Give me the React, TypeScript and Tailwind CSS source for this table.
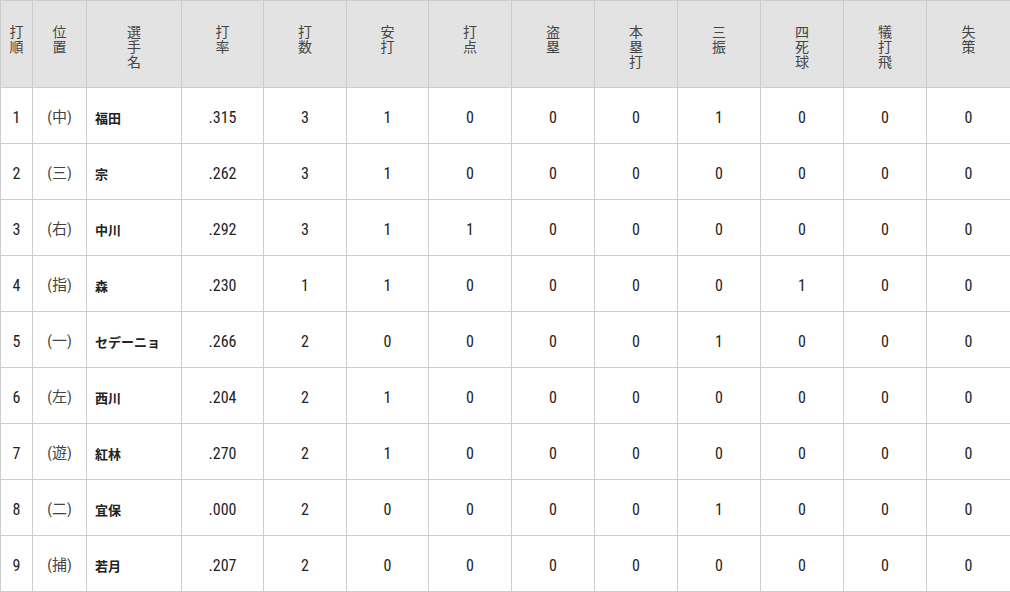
import React from "react";

const headers = [
  "打順", "位置", "選手名", "打率", "打数", "安打", "打点", "盗塁", "本塁打", "三振", "四死球", "犠打飛", "失策",
];
const widths = ["w-[32px]", "w-[54px]", "w-[95px]", "w-[82px]", "w-[83px]", "w-[82px]", "w-[83px]", "w-[83px]", "w-[83px]", "w-[83px]", "w-[83px]", "w-[83px]", "w-[84px]"];

const rows: (string | number)[][] = [
  [1, "(中)", "福田", ".315", 3, 1, 0, 0, 0, 1, 0, 0, 0],
  [2, "(三)", "宗", ".262", 3, 1, 0, 0, 0, 0, 0, 0, 0],
  [3, "(右)", "中川", ".292", 3, 1, 1, 0, 0, 0, 0, 0, 0],
  [4, "(指)", "森", ".230", 1, 1, 0, 0, 0, 0, 1, 0, 0],
  [5, "(一)", "セデーニョ", ".266", 2, 0, 0, 0, 0, 1, 0, 0, 0],
  [6, "(左)", "西川", ".204", 2, 1, 0, 0, 0, 0, 0, 0, 0],
  [7, "(遊)", "紅林", ".270", 2, 1, 0, 0, 0, 0, 0, 0, 0],
  [8, "(二)", "宜保", ".000", 2, 0, 0, 0, 0, 1, 0, 0, 0],
  [9, "(捕)", "若月", ".207", 2, 0, 0, 0, 0, 0, 0, 0, 0],
];

const numFont = "font-['Roboto_Condensed','Liberation_Sans_Narrow','DejaVu_Sans_Condensed',Roboto,'Noto_Sans_CJK_JP',sans-serif]";

export default function App() {
  return (
    <div className="w-[1010px] h-[592px] bg-white overflow-hidden">
      <table className="w-[1010px] table-fixed border-collapse">
        <colgroup>
          {widths.map((w, i) => (
            <col key={i} className={w} />
          ))}
        </colgroup>
        <thead>
          <tr className="h-[87px] bg-[#e3e3e3]">
            {headers.map((h, i) => (
              <th
                key={i}
                className="border border-[#cccccc] align-top p-0 pt-[23px] font-normal text-[14px] text-[#444] font-['Noto_Sans_CJK_JP',sans-serif]"
              >
                <div className="flex flex-col items-center">
                  {h.split("").map((c, j) => (
                    <div key={j} className="h-[15px] leading-[15px]">
                      {c}
                    </div>
                  ))}
                </div>
              </th>
            ))}
          </tr>
        </thead>
        <tbody>
          {rows.map((r, ri) => (
            <tr key={ri} className="h-[56px]">
              {r.map((v, ci) => {
                if (ci === 2) {
                  return (
                    <td
                      key={ci}
                      className="border border-[#cccccc] px-[8px] pt-[4px] text-left text-[13px] font-bold text-[#222] font-['Noto_Sans_CJK_JP',sans-serif]"
                    >
                      {v}
                    </td>
                  );
                }
                if (ci === 1) {
                  return (
                    <td
                      key={ci}
                      className={`border border-[#cccccc] p-0 pt-[4px] text-center text-[15px] text-[#444] ${numFont}`}
                    >
                      {v}
                    </td>
                  );
                }
                return (
                  <td
                    key={ci}
                    className={`border border-[#cccccc] p-0 pt-[4px] text-center text-[16px] text-[#222] ${numFont}`}
                  >
                    {v}
                  </td>
                );
              })}
            </tr>
          ))}
        </tbody>
      </table>
    </div>
  );
}
